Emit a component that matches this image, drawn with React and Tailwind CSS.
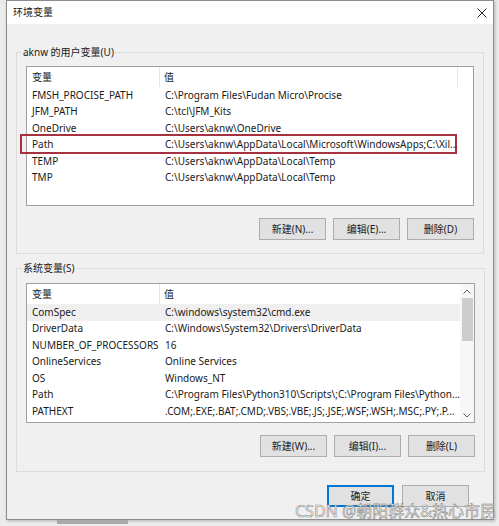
import React from 'react';

const userVars = [
  ['FMSH_PROCISE_PATH', 'C:\\Program Files\\Fudan Micro\\Procise'],
  ['JFM_PATH', 'C:\\tcl\\JFM_Kits'],
  ['OneDrive', 'C:\\Users\\aknw\\OneDrive'],
  ['Path', 'C:\\Users\\aknw\\AppData\\Local\\Microsoft\\WindowsApps;C:\\Xil...'],
  ['TEMP', 'C:\\Users\\aknw\\AppData\\Local\\Temp'],
  ['TMP', 'C:\\Users\\aknw\\AppData\\Local\\Temp'],
];

const sysVars = [
  ['ComSpec', 'C:\\windows\\system32\\cmd.exe'],
  ['DriverData', 'C:\\Windows\\System32\\Drivers\\DriverData'],
  ['NUMBER_OF_PROCESSORS', '16'],
  ['OnlineServices', 'Online Services'],
  ['OS', 'Windows_NT'],
  ['Path', 'C:\\Program Files\\Python310\\Scripts\\;C:\\Program Files\\Python...'],
  ['PATHEXT', '.COM;.EXE;.BAT;.CMD;.VBS;.VBE;.JS;.JSE;.WSF;.WSH;.MSC;.PY;.P...'],
];

const WinButton = ({ children, primary }) => (
  <button
    className={`h-[22px] w-[67px] flex items-center justify-center bg-[#e1e1e1] text-[#1a1a1a] ${
      primary ? 'border border-[#0078d7] shadow-[inset_0_0_0_1px_#0078d7]' : 'border border-[#adadad]'
    }`}
  >
    {children}
  </button>
);

const Header = ({ full }) => (
  <div className="h-[20px] flex items-center">
    <div className="w-[133px] h-full flex items-center pl-[5px] border-r border-[#e5e5e5]">变量</div>
    <div className={`h-full flex items-center pl-[4px] ${full ? 'w-[298px] border-r border-[#e5e5e5]' : 'flex-1'}`}>值</div>
  </div>
);

const Row = ({ name, value, selected, marked }) => (
  <div className={`relative h-[16.5px] flex items-center ${selected ? 'bg-[#efefef]' : ''}`}>
    <div className="w-[133px] pl-[5px] whitespace-nowrap overflow-hidden">{name}</div>
    <div className="flex-1 pl-[5px] whitespace-nowrap overflow-hidden">{value}</div>
    {marked && (
      <div className="absolute -left-[7px] right-[16px] -top-[3px] -bottom-[1px] border-2 border-[#a8313f]" />
    )}
  </div>
);

const Chevron = ({ up }) => (
  <svg width="8" height="5" viewBox="0 0 8 5" fill="none" stroke="#606060" strokeWidth="1">
    <path d={up ? 'M0.5 4.5 L4 1 L7.5 4.5' : 'M0.5 0.5 L4 4 L7.5 0.5'} />
  </svg>
);

export default function App() {
  return (
    <div
      className="relative w-[499px] h-[526px] bg-[#ececec] overflow-hidden text-[10px] text-[#1a1a1a]"
      style={{ fontFamily: '"Noto Sans", "Noto Sans CJK SC", sans-serif' }}
    >
      <div className="ml-[6px] w-[488px] h-[520px] border border-[#8c8c8c] bg-[#f0f0f0] flex flex-col shadow-[1px_1px_3px_rgba(0,0,0,0.25)]">
        {/* title bar */}
        <div className="h-[23px] bg-white flex items-center justify-between pl-[6px] pr-[6px]">
          <span>环境变量</span>
          <svg width="10" height="10" viewBox="0 0 10 10" stroke="#222" strokeWidth="1">
            <path d="M0.5 0.5 L9.5 9.5 M9.5 0.5 L0.5 9.5" />
          </svg>
        </div>

        <div className="px-[9px] flex flex-col">
          {/* user variables */}
          <fieldset className="mt-[21px] border border-[#dcdcdc]">
            <legend className="ml-[5px] px-[1px] leading-[14px]">aknw 的用户变量(U)</legend>
            <div className="px-[9px] pt-[7px] pb-[13px]">
              <div className="h-[140px] border border-[#a0a0a0] bg-white">
                <Header full />
                {userVars.map(([n, v]) => (
                  <Row key={n} name={n} value={v} marked={n === 'Path'} />
                ))}
              </div>
              <div className="mt-[12px] flex justify-end gap-[7px]">
                <WinButton>新建(N)...</WinButton>
                <WinButton>编辑(E)...</WinButton>
                <WinButton>删除(D)</WinButton>
              </div>
            </div>
          </fieldset>

          {/* system variables */}
          <fieldset className="mt-[7px] border border-[#dcdcdc]">
            <legend className="ml-[5px] px-[1px] leading-[14px]">系统变量(S)</legend>
            <div className="px-[9px] pt-[8px] pb-[14px]">
              <div className="h-[140px] border border-[#a0a0a0] bg-white flex">
                <div className="flex-1 min-w-0">
                  <Header />
                  {sysVars.map(([n, v], i) => (
                    <Row key={n} name={n} value={v} selected={i === 0} />
                  ))}
                </div>
                <div className="w-[14px] bg-[#f7f7f7] flex flex-col items-center">
                  <div className="h-[14px] flex items-center justify-center">
                    <Chevron up />
                  </div>
                  <div className="w-[11px] h-[43px] bg-[#cdcdcd]" />
                  <div className="flex-1" />
                  <div className="h-[14px] flex items-center justify-center">
                    <Chevron />
                  </div>
                </div>
              </div>
              <div className="mt-[12px] flex justify-end gap-[7px]">
                <WinButton>新建(W)...</WinButton>
                <WinButton>编辑(I)...</WinButton>
                <WinButton>删除(L)</WinButton>
              </div>
            </div>
          </fieldset>

          <div className="mt-[13px] pr-[15px] flex justify-end gap-[8px]">
            <WinButton primary>确定</WinButton>
            <WinButton>取消</WinButton>
          </div>
        </div>
      </div>

      <div className="flex">
        <div className="ml-[57px] w-[71px] h-[4px] bg-[#a9a9a9]" />
      </div>

      <div className="absolute right-[3px] bottom-[6px] text-[16px] leading-[18px] text-white [-webkit-text-stroke:0.6px_#8a8a8a] whitespace-nowrap">
        CSDN @朝阳群众&amp;热心市民
      </div>
    </div>
  );
}
